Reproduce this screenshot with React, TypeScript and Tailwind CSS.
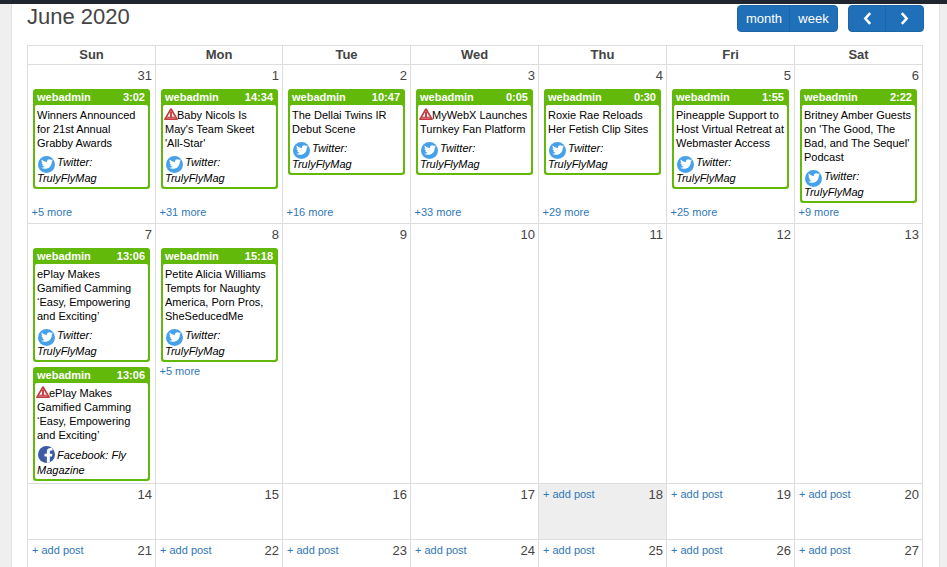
import React from "react";
import { FaFacebookF, FaTwitter } from "react-icons/fa";

type Post = {
  time: string;
  title: string[];
  warn?: boolean;
  social: "tw" | "fb";
};

type Day = {
  n: number;
  posts?: Post[];
  more?: string;
  add?: boolean;
  today?: boolean;
};

const tw = "tw" as const;
const fb = "fb" as const;

const row1: Day[] = [
  { n: 31, more: "+5 more", posts: [{ time: "3:02", social: tw, title: ["Winners Announced", "for 21st Annual", "Grabby Awards"] }] },
  { n: 1, more: "+31 more", posts: [{ time: "14:34", social: tw, warn: true, title: ["Baby Nicols Is", "May's Team Skeet", "'All-Star'"] }] },
  { n: 2, more: "+16 more", posts: [{ time: "10:47", social: tw, title: ["The Dellai Twins IR", "Debut Scene"] }] },
  { n: 3, more: "+33 more", posts: [{ time: "0:05", social: tw, warn: true, title: ["MyWebX Launches", "Turnkey Fan Platform"] }] },
  { n: 4, more: "+29 more", posts: [{ time: "0:30", social: tw, title: ["Roxie Rae Reloads", "Her Fetish Clip Sites"] }] },
  { n: 5, more: "+25 more", posts: [{ time: "1:55", social: tw, title: ["Pineapple Support to", "Host Virtual Retreat at", "Webmaster Access"] }] },
  { n: 6, more: "+9 more", posts: [{ time: "2:22", social: tw, title: ["Britney Amber Guests", "on 'The Good, The", "Bad, and The Sequel'", "Podcast"] }] },
];

const row2: Day[] = [
  {
    n: 7,
    posts: [
      { time: "13:06", social: tw, title: ["ePlay Makes", "Gamified Camming", "‘Easy, Empowering", "and Exciting’"] },
      { time: "13:06", social: fb, warn: true, title: ["ePlay Makes", "Gamified Camming", "‘Easy, Empowering", "and Exciting’"] },
    ],
  },
  { n: 8, more: "+5 more", posts: [{ time: "15:18", social: tw, title: ["Petite Alicia Williams", "Tempts for Naughty", "America, Porn Pros,", "SheSeducedMe"] }] },
  { n: 9 },
  { n: 10 },
  { n: 11 },
  { n: 12 },
  { n: 13 },
];

const row3: Day[] = [
  { n: 14 },
  { n: 15 },
  { n: 16 },
  { n: 17 },
  { n: 18, add: true, today: true },
  { n: 19, add: true },
  { n: 20, add: true },
];

const row4: Day[] = [21, 22, 23, 24, 25, 26, 27].map((n) => ({ n, add: true }));

const WarnIcon = () => (
  <svg viewBox="0 0 16 14" className="inline-block w-[14px] h-[12px] -ml-[1px] -mr-[1px] align-[-1px]">
    <path d="M8 1.2 15 13H1Z" fill="#fff" stroke="#c23a3f" strokeWidth="2" strokeLinejoin="round" />
    <path d="M8 4v7" stroke="#c23a3f" strokeWidth="2.2" />
    <path d="M3.5 10.8h9" stroke="#c23a3f" strokeWidth="1.4" />
  </svg>
);

const SocialIcon = ({ kind }: { kind: "tw" | "fb" }) =>
  kind === "tw" ? (
    <span className="inline-flex w-[17px] h-[17px] ml-[1px] mr-[2px] rounded-full bg-[#45a1ea] items-center justify-center align-[-4px]">
      <FaTwitter className="text-white w-[12px] h-[12px]" />
    </span>
  ) : (
    <span className="inline-flex w-[17px] h-[17px] ml-[1px] mr-[2px] rounded-full bg-[#3b5ba5] items-end justify-center overflow-hidden align-[-4px]">
      <FaFacebookF className="text-white w-[13px] h-[15px] translate-x-[2px]" />
    </span>
  );

const PostCard = ({ post }: { post: Post }) => (
  <div className="bg-[#62b90a] rounded-[3px] px-[2px] pb-[2px] w-[117px]">
    <div className="flex justify-between items-center h-[16px] px-[2px] text-white font-bold text-[11px] leading-[16px]">
      <span>webadmin</span>
      <span className="pr-[1px]">{post.time}</span>
    </div>
    <div className="bg-white rounded-[2px] px-[2px] pt-[3px] pb-[1px] text-[11px] leading-[14px] text-black whitespace-nowrap">
      {post.title.map((line, i) => (
        <div key={i}>
          {i === 0 && post.warn ? <WarnIcon /> : null}
          {line}
        </div>
      ))}
      <div className="italic mt-[4px]">
        <div className="h-[16px] leading-[16px]">
          <SocialIcon kind={post.social} />
          {post.social === "tw" ? "Twitter:" : "Facebook: Fly"}
        </div>
        <div className="h-[16px] leading-[16px]">{post.social === "tw" ? "TrulyFlyMag" : "Magazine"}</div>
      </div>
    </div>
  </div>
);

const DayCell = ({ day, pinMore }: { day: Day; pinMore?: boolean }) => (
  <div className={`border-r border-[#ddd] flex flex-col min-w-0 ${day.today ? "bg-[#eeeeee]" : "bg-white"}`}>
    <div className="flex justify-between items-start h-[18px] pl-1 pr-[3px] pt-[2px]">
      <span className="text-[11px] leading-[16px] text-[#2f78b7]">{day.add ? "+ add post" : ""}</span>
      <span className="text-[13px] leading-[16px] pt-[1px] text-[#444]">{day.n}</span>
    </div>
    {day.posts ? (
      <div className="flex flex-col gap-[5px] pl-[5px] pt-[6px]">
        {day.posts.map((p, i) => (
          <PostCard key={i} post={p} />
        ))}
      </div>
    ) : null}
    {day.more ? (
      <div className={`pl-[3.5px] text-[11px] leading-[14px] text-[#2f78b7] ${pinMore ? "mt-auto pb-[4px]" : "mt-[2px]"}`}>
        {day.more}
      </div>
    ) : null}
  </div>
);

const CalRow = ({ days, height, pinMore }: { days: Day[]; height: string; pinMore?: boolean }) => (
  <div className={`grid grid-cols-[128px_127px_128px_128px_128px_128px_128px] border-b border-[#ddd] ${height}`}>
    {days.map((d) => (
      <DayCell key={d.n} day={d} pinMore={pinMore} />
    ))}
  </div>
);

export default function App() {
  return (
    <div
      className="h-[567px] overflow-hidden bg-[#efefef] flex flex-col"
      style={{ fontFamily: '"Liberation Sans", Arial, sans-serif' }}
    >
      <div className="h-1 bg-[#1f2630] shrink-0"></div>
      <div className="ml-[11px] mr-[7px] bg-white border-x border-[#e4e4e4] flex-1 pl-[15px] pr-[15px]">
        <div className="flex justify-between items-start h-[41px]">
          <h2 className="text-[22px] leading-[25px] text-[#444] font-normal">June 2020</h2>
          <div className="flex gap-[10px] pt-[1px]">
            <div className="flex h-[27px] rounded-[4px] bg-[#1f70b8] text-white text-[13px] leading-[25px] border border-[#1c65a6]">
              <span className="w-[52px] pl-[1px] text-center border-r border-[#1c65a6]">month</span>
              <span className="w-[47px] text-center">week</span>
            </div>
            <div className="flex h-[27px] rounded-[4px] bg-[#1f70b8] text-white border border-[#1c65a6]">
              <span className="w-[37px] flex items-center justify-center border-r border-[#1c65a6]">
                <svg viewBox="0 0 10 14" className="w-[11px] h-[15px]">
                  <path d="M7.5 2 3 7l4.5 5" fill="none" stroke="#fff" strokeWidth="2.4" />
                </svg>
              </span>
              <span className="w-[37px] flex items-center justify-center">
                <svg viewBox="0 0 10 14" className="w-[11px] h-[15px]">
                  <path d="M2.5 2 7 7l-4.5 5" fill="none" stroke="#fff" strokeWidth="2.4" />
                </svg>
              </span>
            </div>
          </div>
        </div>
        <div className="w-[896px] border-l border-t border-[#ddd]">
          <div className="grid grid-cols-[128px_127px_128px_128px_128px_128px_128px] h-[19px] border-b border-[#ddd]">
            {["Sun", "Mon", "Tue", "Wed", "Thu", "Fri", "Sat"].map((d) => (
              <div key={d} className="border-r border-[#ddd] text-center font-bold text-[13px] leading-[18px] text-[#444]">
                {d}
              </div>
            ))}
          </div>
          <CalRow days={row1} height="h-[159px]" pinMore />
          <CalRow days={row2} height="h-[260px]" />
          <CalRow days={row3} height="h-[56px]" />
          <CalRow days={row4} height="h-[57px]" />
        </div>
      </div>
    </div>
  );
}
